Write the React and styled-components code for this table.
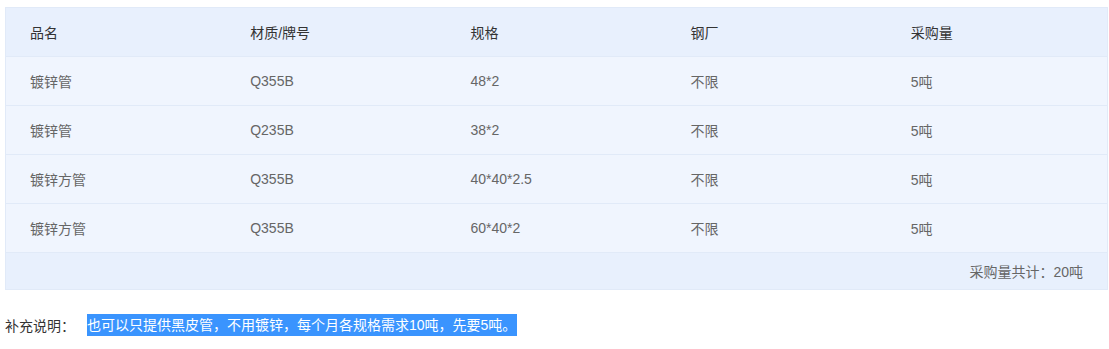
import React from "react";
import styled, { createGlobalStyle } from "styled-components";

const Global = createGlobalStyle`
  html, body { margin: 0; padding: 0; background: #fff; }
  body { font-family: "Liberation Sans", "Noto Sans CJK SC", sans-serif; }
`;

const Page = styled.div`
  padding: 7px 1px 0 5px;
`;

const Table = styled.div`
  border: 1px solid #e1eaf8;
  border-bottom: none;
`;

const Row = styled.div`
  display: grid;
  grid-template-columns: repeat(5, 1fr);
  height: 48px;
  align-items: center;
  background: ${(p) => (p.$head ? "#e8f0fd" : "#f0f5fe")};
  border-bottom: 1px solid #e1eaf8;
`;

const Cell = styled.div`
  padding-left: 24px;
  font-size: 14px;
  color: ${(p) => (p.$head ? "#333" : "#666")};
`;

const Footer = styled.div`
  height: 36px;
  display: flex;
  align-items: center;
  justify-content: flex-end;
  padding-right: 24px;
  background: #e8f0fd;
  border-bottom: 1px solid #e1eaf8;
  font-size: 14px;
  color: #666;
`;

const Note = styled.div`
  margin-top: 24px;
  display: flex;
  align-items: center;
  font-size: 14px;
  color: #333;
`;

const Label = styled.span`
  width: 82px;
`;

const Highlight = styled.span`
  background: #3a94fe;
  color: #fff;
  line-height: 22px;
  padding: 0 1px 0 0;
`;

const head = ["品名", "材质/牌号", "规格", "钢厂", "采购量"];
const rows = [
  ["镀锌管", "Q355B", "48*2", "不限", "5吨"],
  ["镀锌管", "Q235B", "38*2", "不限", "5吨"],
  ["镀锌方管", "Q355B", "40*40*2.5", "不限", "5吨"],
  ["镀锌方管", "Q355B", "60*40*2", "不限", "5吨"],
];

export default function App() {
  return (
    <>
      <Global />
      <Page>
        <Table>
          <Row $head>
            {head.map((h) => (
              <Cell key={h} $head>
                {h}
              </Cell>
            ))}
          </Row>
          {rows.map((r, i) => (
            <Row key={i}>
              {r.map((c, j) => (
                <Cell key={j}>{c}</Cell>
              ))}
            </Row>
          ))}
          <Footer>采购量共计：20吨</Footer>
        </Table>
        <Note>
          <Label>补充说明：</Label>
          <Highlight>也可以只提供黑皮管，不用镀锌，每个月各规格需求10吨，先要5吨。</Highlight>
        </Note>
      </Page>
    </>
  );
}
